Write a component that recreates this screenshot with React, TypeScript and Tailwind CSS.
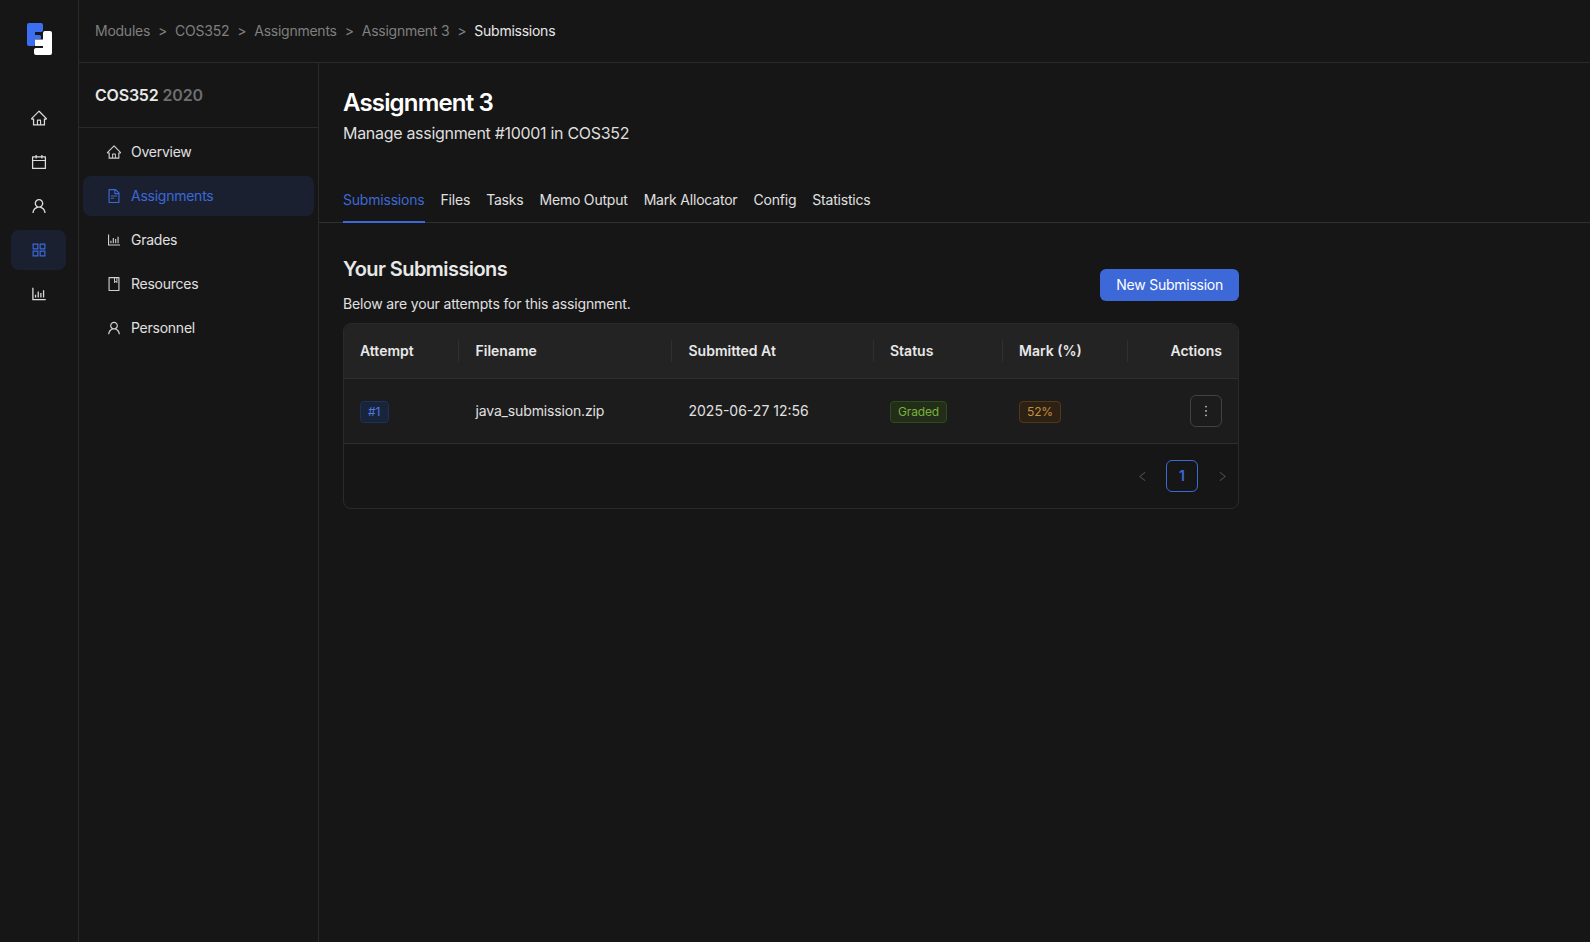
import React from 'react';
import {
  AiOutlineHome,
  AiOutlineCalendar,
  AiOutlineUser,
  AiOutlineAppstore,
  AiOutlineBarChart,
  AiOutlineFileText,
  AiOutlineBook,
  AiOutlineMore,
  AiOutlineLeft,
  AiOutlineRight,
} from 'react-icons/ai';

const Logo = () => (
  <svg width="25" height="32" viewBox="0 0 25 32" className="block">
    <path d="M2 0h12a2 2 0 0 1 2 2v5a2 2 0 0 1-2 2H8v3h4.500a1.500 1.500 0 0 1 1.500 1.500v1.500a1 1 0 0 1-1 1H8v5.500a1.500 1.500 0 0 1-1.500 1.500H2a2 2 0 0 1-2-2V2a2 2 0 0 1 2-2z" fill="#3b6ef0" />
    <path d="M18 8h5a2 2 0 0 1 2 2v20a2 2 0 0 1-2 2H9a2 2 0 0 1-2-2v-3a2 2 0 0 1 2-2h7v-2H8v-6.500h8V10a2 2 0 0 1 2-2z" fill="#ffffff" />
  </svg>
);

const railItems = [
  { icon: AiOutlineHome },
  { icon: AiOutlineCalendar },
  { icon: AiOutlineUser },
  { icon: AiOutlineAppstore, active: true },
  { icon: AiOutlineBarChart },
];

const navItems = [
  { label: 'Overview', icon: AiOutlineHome },
  { label: 'Assignments', icon: AiOutlineFileText, active: true },
  { label: 'Grades', icon: AiOutlineBarChart },
  { label: 'Resources', icon: AiOutlineBook },
  { label: 'Personnel', icon: AiOutlineUser },
];

const crumbs = ['Modules', 'COS352', 'Assignments', 'Assignment 3'];
const tabs = ['Submissions', 'Files', 'Tasks', 'Memo Output', 'Mark Allocator', 'Config', 'Statistics'];

const Separator = () => <span className="absolute -left-px top-1/2 h-[22px] w-px -translate-y-1/2 bg-[#303030]"></span>;

export default function App() {
  return (
    <div className="flex h-[942px] overflow-hidden bg-[#161616] font-['Inter',sans-serif] text-sm tracking-[-0.15px] text-[#e8e8e8]">
      {/* Icon rail */}
      <aside className="flex w-[79px] shrink-0 flex-col items-center border-r border-[#2a2a2a]">
        <div className="h-[62px] w-full pl-[27px] pt-[23px]">
          <Logo />
        </div>
        <div className="ml-[11px] mt-[36px] flex flex-col gap-1 self-start">
          {railItems.map((item, i) => (
            <div
              key={i}
              className={`flex h-10 w-[55px] items-center justify-center rounded-lg ${item.active ? 'bg-[#1a2030] text-[#3d68d8]' : 'text-[#dcdcdc]'}`}
            >
              <item.icon size={18} />
            </div>
          ))}
        </div>
      </aside>

      <div className="flex min-w-0 flex-1 flex-col">
        {/* Breadcrumb */}
        <header className="flex h-[63px] shrink-0 items-center gap-2 border-b border-[#2a2a2a] px-4 tracking-[-0.25px]">
          {crumbs.map((c) => (
            <React.Fragment key={c}>
              <span className="text-[#7f7f7f]">{c}</span>
              <span className="text-[#7f7f7f]">&gt;</span>
            </React.Fragment>
          ))}
          <span className="text-[#e8e8e8]">Submissions</span>
        </header>

        <div className="flex min-h-0 flex-1">
          {/* Module nav */}
          <aside className="w-[240px] shrink-0 border-r border-[#2a2a2a]">
            <div className="flex h-[65px] items-center gap-1 border-b border-[#2a2a2a] pl-4 text-base font-semibold tracking-[-0.2px]">
              <span className="text-[#e8e8e8]">COS352</span>
              <span className="text-[#6e6e6e]">2020</span>
            </div>
            <nav className="mt-[4px] flex flex-col gap-1 px-1 tracking-[-0.25px]">
              {navItems.map((item) => (
                <div
                  key={item.label}
                  className={`flex h-10 items-center gap-[9px] rounded-lg pl-[23px] ${item.active ? 'bg-[#1a2030] text-[#3d68d8]' : 'text-[#e0e0e0]'}`}
                >
                  <item.icon size={16} className={item.active ? '' : 'text-[#d0d0d0]'} />
                  <span>{item.label}</span>
                </div>
              ))}
            </nav>
          </aside>

          {/* Main */}
          <main className="min-w-0 flex-1 pt-[25px]">
            <div className="pl-6">
              <h1 className="text-2xl font-semibold leading-[30px] tracking-[-0.83px] text-white">Assignment 3</h1>
              <p className="mt-[3px] text-base leading-6 tracking-[-0.3px] text-[#dedede]">Manage assignment #10001 in COS352</p>
            </div>

            <div className="mt-[32px] flex gap-4 border-b border-[#303030] pl-6 tracking-[-0.2px]">
              {tabs.map((t, i) => (
                <div
                  key={t}
                  className={`-mb-px flex h-[46px] items-center border-b-2 pt-[2px] ${i === 0 ? 'border-[#3d68d8] text-[#3d68d8]' : 'border-transparent text-[#e0e0e0]'}`}
                >
                  {t}
                </div>
              ))}
            </div>

            <div className="w-[920px] pl-6 pt-[31px]">
              <div className="flex items-center justify-between">
                <div>
                  <h2 className="text-xl font-semibold leading-[30px] tracking-[-0.57px] text-[#e8e8e8]">Your Submissions</h2>
                  <p className="mt-[11px] leading-[18px] text-[#e0e0e0]">Below are your attempts for this assignment.</p>
                </div>
                <button className="mt-[2px] h-8 rounded-md bg-[#3d68d8] px-4 tracking-[-0.25px] text-white">New Submission</button>
              </div>

              <div className="mt-[10px] overflow-hidden rounded-lg border border-[#2a2a2a]">
                <div className="grid h-[55px] grid-cols-[115px_213px_202px_129px_125px_1fr] items-center border-b border-[#2e2e2e] bg-[#232323] font-semibold tracking-normal text-[#e8e8e8]">
                  <div className="px-4">Attempt</div>
                  <div className="relative pl-[16.500px]"><Separator />Filename</div>
                  <div className="relative pl-[16.500px]"><Separator />Submitted At</div>
                  <div className="relative px-4"><Separator />Status</div>
                  <div className="relative px-4"><Separator />Mark (%)</div>
                  <div className="relative px-4 text-right"><Separator />Actions</div>
                </div>
                <div className="grid h-[65px] grid-cols-[115px_213px_202px_129px_125px_1fr] items-center border-b border-[#2e2e2e] bg-[#1c1c1c] text-[#e0e0e0]">
                  <div className="px-4 pt-[2px]">
                    <span className="inline-block rounded border border-[#1f3158] bg-[#18233c] pl-[7px] pr-2 text-xs leading-5 text-[#4f7be0]">#1</span>
                  </div>
                  <div className="pl-[16.500px]">java_submission.zip</div>
                  <div className="pl-[16.500px] tracking-normal">2025-06-27 12:56</div>
                  <div className="px-4 pt-[2px]">
                    <span className="inline-block rounded border border-[#2f4a1c] bg-[#222e17] px-[7px] text-xs leading-5 text-[#78b13f]">Graded</span>
                  </div>
                  <div className="px-4 pt-[2px]">
                    <span className="inline-block rounded border border-[#523817] bg-[#2c2113] px-[7px] text-xs leading-5 text-[#c98f3a]">52%</span>
                  </div>
                  <div className="flex justify-end px-4">
                    <button className="flex h-8 w-8 items-center justify-center rounded-md border border-[#424242] text-[#c8c8c8]">
                      <AiOutlineMore size={16} />
                    </button>
                  </div>
                </div>
                <div className="flex h-[64px] items-center justify-end pr-[9px]">
                  <AiOutlineLeft size={13} className="mr-[17px] text-[#4a4a4a]" />
                  <span className="flex h-8 w-8 items-center justify-center rounded-md border border-[#3d68d8] font-semibold text-[#3d68d8]">1</span>
                  <AiOutlineRight size={13} className="ml-[18px] text-[#4a4a4a]" />
                </div>
              </div>
            </div>
          </main>
        </div>
      </div>
    </div>
  );
}
